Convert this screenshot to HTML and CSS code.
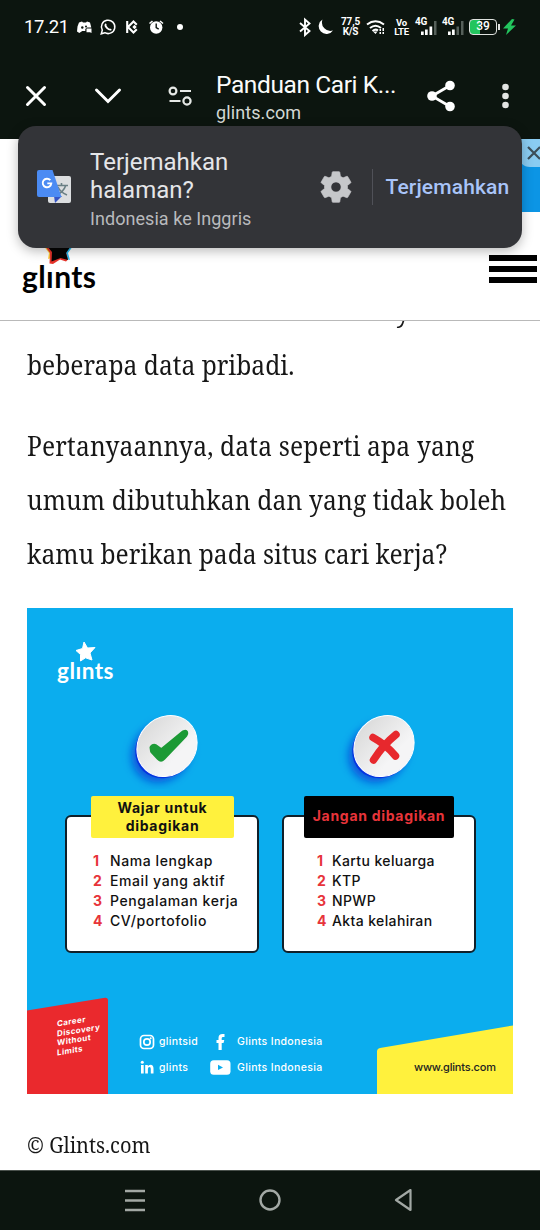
FILE: index.html
```html
<!DOCTYPE html>
<html lang="id">
<head>
<meta charset="utf-8">
<title>Panduan Cari Kerja</title>
<link rel="stylesheet" href="styles.css">
</head>
<body>
<div class="phone">
  <header class="status">
    <span class="clock">17.21</span>
    <svg class="status-left" width="112" height="20" viewBox="76 17 112 20">
      <path fill="#fff" d="M79 22.500l3-1 1 1h3l1-1 3 1 1.300 5h-4.500l-1.500 1.500v2h-3l-3 2-2.300-1.500.5-5z"/><circle cx="82.300" cy="27.500" r="1.200" fill="#0c150f"/><path fill="#fff" d="M86.500 28.500h5V33l-1.500-.8h-3.500z"/><circle cx="86" cy="26.500" r="1" fill="#0c150f"/>
      <path fill="none" stroke="#fff" stroke-width="1.500" d="M101.300 33.800l1-3.600a6.700 6.700 0 1 1 2.500 2.500z"/><path fill="none" stroke="#fff" stroke-width="1.900" stroke-linecap="round" d="M105.600 24.600c-.8 1.500 2.700 5.400 5 5"/>
      <path fill="none" stroke="#fff" stroke-width="2.100" d="M127.200 21v12M128 27l5.500-5.500 3.300 3.200M128 27l5.500 5.500 3.300-3.200"/><path fill="#fff" d="M134.500 24.800l2.200 2.200-2.200 2.200-2.200-2.200z"/>
      <circle cx="156.200" cy="27.500" r="6.200" fill="#fff"/><path stroke="#fff" stroke-width="1.600" d="M149.500 23.500l3-2.500M163 23.500l-3-2.500"/><path fill="none" stroke="#0c150f" stroke-width="1.400" d="M156.200 23.500v4.200l2.500 1.500"/>
      <circle cx="180" cy="27" r="3" fill="#fff"/>
    </svg>
    <span class="push"></span>
    <svg class="status-bt" width="36" height="20" viewBox="298 17 36 20">
      <path fill="none" stroke="#fff" stroke-width="1.900" d="M300 23l9.500 8-4.500 4V19.500l4.500 4-9.500 8"/><path fill="#fff" d="M322.500 19.500A7.800 7.800 0 1 0 333 30.500 8.500 8.500 0 0 1 322.500 19.500z"/>
    </svg>
    <span class="tiny speed"><span>77,5</span><span>K/S</span></span>
    <svg class="wifi" width="20" height="18" viewBox="0 0 20 18"><g fill="none" stroke="#fff" stroke-width="2"><path d="M1 6.500q8.500-6.500 17 0M4 10q5.500-4.500 11 0M6.500 13q3-2.500 5.500-.5"/></g><path fill="#fff" d="M7 13.500h4.500L9.500 16zM13.500 11h1.500v2h-1.500zM13.500 14h1.500v2h-1.500zM16.500 10h1.500v3h-1.500zM16.500 14h1.500v2h-1.500z"/></svg>
    <span class="tiny lte"><span>Vo</span><span>LTE</span></span>
    <span class="signal"><b>4G</b><svg width="22" height="18" viewBox="0 0 22 18"><path fill="#fff" d="M6 13.500h2.700V17H6zM10 11.500h2.700V17H10zM14.500 8.500h2.700V17h-2.700z"/><path fill="#56605a" d="M19 3h2.500v14H19z"/></svg></span>
    <span class="signal"><b>4G</b><svg width="22" height="18" viewBox="0 0 22 18"><path fill="#fff" d="M6 13.500h2.700V17H6zM10 11.500h2.700V17H10z"/><path fill="#56605a" d="M14.500 8.500H17V17h-2.500zM19 3h2.500v14H19z"/></svg></span>
    <span class="battery">39</span><i class="cap"></i>
    <svg width="15" height="18" viewBox="0 0 15 18"><path fill="#23c55e" d="M10 1L1 10.500h5L4 17l10-9.500H9l3.500-6z"/></svg>
  </header>

  <div class="toolbar">
    <svg class="tools" width="200" height="40" viewBox="0 76 200 40">
      <g fill="none" stroke="#fff" stroke-width="3" stroke-linecap="round"><path d="M27.500 87.500l17 17M44.500 87.500l-17 17"/><path d="M96.500 90l11.500 11.500L119.500 90"/></g>
      <g fill="none" stroke="#e6e9e6" stroke-width="2.200"><circle cx="173" cy="91" r="3.400"/><path d="M180 91h11M169.500 101h11"/><circle cx="187" cy="101" r="3.600"/></g>
    </svg>
    <div class="titles"><div class="title">Panduan Cari K...</div><div class="host">glints.com</div></div>
    <svg class="more" width="113" height="40" viewBox="420 76 113 40">
      <path fill="none" stroke="#fff" stroke-width="2.800" d="M450 85.500L432 96l18 10.500"/><g fill="#fff"><circle cx="450" cy="85.500" r="4.800"/><circle cx="432" cy="96" r="4.800"/><circle cx="450" cy="106.500" r="4.800"/></g>
      <g fill="#e3e5e3"><circle cx="505.500" cy="87" r="3.300"/><circle cx="505.500" cy="96" r="3.300"/><circle cx="505.500" cy="105" r="3.300"/></g>
    </svg>
  </div>

  <div class="site">
    <div class="banner"><span class="banner-close"><svg width="14" height="14" viewBox="0 0 14 14"><path stroke="#3d4f5a" stroke-width="2.200" d="M1 1l12 12M13 1L1 13"/></svg></span></div>
    <div class="site-row">
      <div class="brand">
        <svg width="34" height="34" viewBox="0 0 34 34"><path fill="#ffd13b" d="M1 14l6 8-1 6 10-3 6-12z"/><path fill="#27b9ee" d="M12 15l8 12 8 2-2-7 5-7z"/><path fill="#e6332a" d="M3 15l5 7-.5 10.500 3.500.5 7-4.500 6 2 2-2-2-7 2-6z"/><path fill="#050505" d="M5 15l5 6-.5 9.500L18.500 27l7.500 2-2-7 5-7-9-3H10z"/></svg>
        <span>glınts</span>
      </div>
      <div class="burger"><i></i><i></i><i></i></div>
    </div>
  </div>

  <main class="article">
    <p class="cut">y</p>
    <p>beberapa data pribadi.</p>
    <p><span class="wide">Pertanyaannya, data seperti apa yang</span><br><span class="wider">umum dibutuhkan dan yang tidak boleh</span><br>kamu berikan pada situs cari kerja?</p>

    <section class="poster">
      <svg class="corners" width="486" height="486" viewBox="0 0 486 486">
        <path fill="#ea292d" d="M0 402.500L78 389.700Q81 389.500 81 392.500V486H0z"/>
        <path fill="#fff13d" d="M350 486V443.500Q350 440.500 353 440L486 417.500V486z"/>
      </svg>
      <div class="poster-brand"><svg width="22" height="21" viewBox="0 0 22 21"><path fill="#fff" stroke="#fff" stroke-linejoin="round" d="M9 1l3.500 6 7.500-.5-5 5.500 2 7-6.500-2.200L5.500 20V13.500L1 9.500l6.500-2z"/></svg><span>glınts</span></div>
      <div class="columns">
        <div class="column">
          <svg class="disc" width="90" height="84" viewBox="0 0 90 84"><defs><linearGradient id="face" x1=".5" y1="0" x2=".5" y2="1"><stop offset="0" stop-color="#dcdcdc"/><stop offset=".75" stop-color="#f5f5f6"/></linearGradient><filter id="soft" x="-30%" y="-30%" width="160%" height="160%"><feGaussianBlur stdDeviation="4"/></filter></defs>
            <ellipse cx="44" cy="48" rx="31" ry="28" transform="rotate(-45 44 48)" fill="#0757dc" filter="url(#soft)"/><ellipse cx="48.500" cy="43" rx="32" ry="28.500" transform="rotate(-45 48.500 43)" fill="#0535e0"/><ellipse cx="50" cy="41" rx="32" ry="28.500" transform="rotate(-48 50 41)" fill="url(#face)" stroke="#fff"/>
            <path fill="#1c9a35" stroke="#1c9a35" stroke-width="5" stroke-linejoin="round" d="M35 42.500q2-2.500 4.500 0l5 3.500L67 27.500q3-1 1 2.500L46 53q-2 2-4 0L35.500 46z"/></svg>
          <div class="card left"><h3 class="tag yellow"><span>Wajar untuk</span><span>dibagikan</span></h3>
            <ol><li><b>1</b><span>Nama lengkap</span></li><li><b>2</b><span>Email yang aktif</span></li><li><b>3</b><span>Pengalaman kerja</span></li><li><b>4</b><span>CV/portofolio</span></li></ol></div>
        </div>
        <div class="column">
          <svg class="disc" width="90" height="84" viewBox="0 0 90 84"><ellipse cx="44" cy="48" rx="31" ry="28" transform="rotate(-45 44 48)" fill="#0757dc" filter="url(#soft)"/><ellipse cx="48.500" cy="43" rx="32" ry="28.500" transform="rotate(-45 48.500 43)" fill="#0535e0"/><ellipse cx="50" cy="41" rx="32" ry="28.500" transform="rotate(-48 50 41)" fill="url(#face)" stroke="#fff"/>
            <path fill="none" stroke="#e7282d" stroke-width="7.500" stroke-linecap="round" d="M39 32.500q13 7 22.500 18.500M62 29.500Q49 40 39.500 55"/></svg>
          <div class="card right"><h3 class="tag black"><span>Jangan dibagikan</span></h3>
            <ol><li><b>1</b><span>Kartu keluarga</span></li><li><b>2</b><span>KTP</span></li><li><b>3</b><span>NPWP</span></li><li><b>4</b><span>Akta kelahiran</span></li></ol></div>
        </div>
      </div>
      <footer class="poster-foot">
        <div class="slogan">Career<br>Discovery<br>Without<br>Limits</div>
        <div class="social">
          <svg width="16" height="16" viewBox="0 0 16 16"><g fill="none" stroke="#fff" stroke-width="1.700"><rect x="1.500" y="1.500" width="13" height="13" rx="3.500"/><circle cx="8" cy="8" r="3.200"/></g><circle cx="11.700" cy="4.300" r="1" fill="#fff"/></svg><span>glintsid</span>
          <svg width="22" height="16" viewBox="0 0 22 16"><path fill="#fff" d="M9.500 16V9H7.500V6h2V4q0-4 4-4h2v3H14q-1.300 0-1.300 1.300V6h2.600l-.8 3h-1.800v7z"/></svg><span>Glints Indonesia</span>
          <svg width="16" height="16" viewBox="0 0 16 16"><path fill="#fff" d="M2 5h2.700v8.500H2zM6.200 5h2.600v1.200q1-1.500 2.700-1.500 3 0 3 3.800v5h-2.700V9q0-2-1.300-2-1.600 0-1.600 2v4.500H6.200z"/><circle cx="3.300" cy="2.200" r="1.500" fill="#fff"/></svg><span>glints</span>
          <svg width="22" height="16" viewBox="0 0 22 16"><rect x="1.200" y=".2" width="20.300" height="14.500" rx="3.500" fill="#fff"/><path fill="#0badee" d="M9 4.700l5 2.700-5 2.700z"/></svg><span>Glints Indonesia</span>
        </div>
        <div class="url">www.glints.com</div>
      </footer>
    </section>
    <div class="caption">© Glints.com</div>
  </main>

  <nav class="nav">
    <svg width="24" height="24" viewBox="0 0 24 24"><path stroke="#a2a8a4" stroke-width="2.600" d="M2 2h20M2 11.500h20M2 21h20"/></svg>
    <svg width="24" height="24" viewBox="0 0 24 24"><circle cx="12" cy="11" r="9.500" fill="none" stroke="#a2a8a4" stroke-width="2.400"/></svg>
    <svg width="24" height="24" viewBox="0 0 24 24"><path fill="none" stroke="#a2a8a4" stroke-width="2.200" stroke-linejoin="round" d="M18.500 1v20L4 11z"/></svg>
  </nav>

  <aside class="translate">
    <svg width="36" height="36" viewBox="36 169 36 36"><rect x="48" y="176" width="23" height="27" rx="2" fill="#dcdee0"/><path fill="none" stroke="#6b8085" stroke-width="1.600" d="M55 185.500h13M61.500 183v3M65.500 186q-2 6-9 9M58 187q2 5 9 8"/><path fill="#3454c5" d="M54 196h8l-7 7z"/><path fill="#4b8bf3" d="M39 170h13.500l9 27H39q-2 0-2-2v-23q0-2 2-2z"/><path fill="none" stroke="#fff" stroke-width="1.900" d="M50.300 180.200a4.300 4.300 0 1 0 1 3.200h-4"/></svg>
    <div class="translate-text"><div class="ask">Terjemahkan<br>halaman?</div><div class="langs">Indonesia ke Inggris</div></div>
    <svg class="gear" width="32" height="32" viewBox="2 2 20 20"><path fill="#c6c7ca" stroke="#c6c7ca" stroke-width=".4" d="M19.140 12.940c.04-.3.06-.61.06-.94s-.02-.64-.07-.94l2.030-1.580c.18-.14.23-.41.12-.61l-1.920-3.320c-.12-.22-.37-.29-.59-.22l-2.390.96c-.5-.38-1.030-.7-1.620-.94l-.36-2.540c-.04-.24-.24-.41-.48-.41h-3.840c-.24 0-.43.17-.47.41l-.36 2.540c-.59.24-1.130.57-1.620.94l-2.390-.96c-.22-.08-.47 0-.59.22L2.740 8.870c-.12.21-.08.47.12.61l2.030 1.580c-.05.3-.09.63-.09.94s.02.64.07.94l-2.030 1.580c-.18.14-.23.41-.12.61l1.920 3.320c.12.22.37.29.59.22l2.390-.96c.5.38 1.030.7 1.620.94l.36 2.540c.05.24.24.41.48.41h3.840c.24 0 .44-.17.47-.41l.36-2.540c.59-.24 1.130-.56 1.620-.94l2.390.96c.22.08.47 0 .59-.22l1.920-3.320c.12-.22.07-.47-.12-.61zM12 15.200a3.200 3.200 0 1 1 0-6.400 3.200 3.200 0 0 1 0 6.400z"/></svg>
    <span class="rule"></span>
    <span class="action">Terjemahkan</span>
  </aside>
</div>
</body>
</html>
```
FILE: styles.css
```css
* { box-sizing: border-box; }
body { margin: 0; background: #fff; }
svg { display: block; flex: none; }
p, h3, ol { margin: 0; padding: 0; font-weight: inherit; }
.phone { position: relative; width: 540px; height: 1230px; overflow: hidden; display: flex; flex-direction: column; font-family: Roboto, sans-serif; }

.status { height: 54px; flex: none; background: #0c150f; color: #fff; display: flex; align-items: center; padding: 0 23px 0 24px; }
.clock { font-size: 18.500px; width: 52px; letter-spacing: -.3px; }
.push { flex: 1; }
.tiny { display: flex; flex-direction: column; font-size: 10.5px; line-height: 9px; font-weight: 700; text-align: center; }
.speed { width: 21px; margin-left: 6px; font-size: 10px; letter-spacing: -.2px; line-height: 10px; }
.wifi { margin-left: 5px; }
.lte { margin-left: 7px; width: 17px; font-size: 9.500px; letter-spacing: -.2px; }
.signal { position: relative; margin-left: 5px; width: 22px; }
.signal b { position: absolute; left: 0; top: -2px; font-size: 10px; line-height: 12px; letter-spacing: -.3px; }
.battery { margin: 0 0 0 5px; width: 28px; height: 16px; border: 1.500px solid #dfe2df; border-radius: 4px; background: linear-gradient(90deg, #23c55e 38%, transparent 38%); font-size: 12px; line-height: 13px; font-weight: 500; text-align: center; }
.cap { width: 2px; height: 6px; margin: 0 2px 0 1px; background: #dfe2df; }

.toolbar { height: 85px; flex: none; background: #0c150f; color: #fbfcfb; display: flex; }
.tools, .more { margin-top: 22px; }
.titles { margin-left: 16px; width: 204px; padding-top: 15px; white-space: nowrap; }
.title { font-size: 24.500px; line-height: 32px; letter-spacing: -.4px; }
.host { font-size: 18px; line-height: 24px; color: #d3d8d4; letter-spacing: .1px; }

.site { height: 182px; flex: none; background: #fff; border-bottom: 1px solid #b9b9b9; display: flex; flex-direction: column; }
.banner { align-self: flex-end; width: 22px; height: 73px; flex: none; background: #0c95e5; }
.banner-close { display: flex; align-items: center; justify-content: flex-end; width: 22px; height: 28px; background: #8accf2; border-radius: 0 0 0 12px; }
.banner-close svg { margin-right: -1px; }
.site-row { display: flex; justify-content: space-between; padding: 19px 3px 0 22px; }
.brand { display: flex; flex-direction: column; font: 700 30px/30px Lato, sans-serif; color: #000; }
.brand svg { margin-left: 20px; }
.brand span { margin-top: -4px; letter-spacing: .4px; }
.burger { width: 48px; padding-top: 24px; display: flex; flex-direction: column; gap: 5px; }
.burger i { height: 6px; background: #000; }

.article { flex: 1; min-height: 0; overflow: hidden; background: #fff; padding: 0 27px; font: 27px/54px "Noto Serif", "Liberation Serif", serif; color: #171717; white-space: nowrap; }
.article p { transform: scaleX(.911); transform-origin: 0 0; }
.article p + p { margin-bottom: 27px; }
.article .cut { height: 17px; line-height: 54px; padding-left: 405px; display: flex; align-items: flex-end; }
.wide { letter-spacing: .18px; }
.wider { letter-spacing: .14px; }
.poster { position: relative; width: 486px; height: 486px; background: #0badee; display: flex; flex-direction: column; font-family: Inter, sans-serif; color: #111; }
.corners { position: absolute; left: 0; top: 0; }
.poster-brand { padding: 33px 0 0 30px; height: 103px; color: #fff; font: 700 22.500px/24px Lato, sans-serif; letter-spacing: .5px; }
.poster-brand svg { margin-left: 18px; }
.poster-brand span { display: block; margin-top: -3px; }
.columns { display: flex; gap: 23px; padding-left: 38px; }
.column { width: 194px; }
.disc { margin-left: 52px; margin-top: -6px; }
.card { margin-top: 26px; height: 138px; background: #fff; border: 2px solid #10202a; border-radius: 6px; }
.tag { margin: -21px auto 0; height: 42px; border-radius: 2px; display: flex; flex-direction: column; justify-content: center; text-align: center; font-size: 14px; line-height: 18px; font-weight: 700; letter-spacing: .7px; }
.yellow { width: 143px; margin-left: 24px; background: #fff13d; color: #111; }
.black { width: 150px; background: #000; color: #e7343a; padding-bottom: 3px; }
.card ol { list-style: none; padding: 13px 0 0 26px; font-size: 14px; line-height: 20px; font-weight: 500; letter-spacing: .58px; }
.card.right ol { padding-left: 33px; letter-spacing: .38px; }
.card li { display: flex; }
.card li b { width: 17px; color: #e7343a; font-weight: 700; }
.card.right li b { width: 15px; }
.poster-foot { position: relative; display: flex; flex: 1; font-weight: 500; font-size: 10.500px; letter-spacing: .33px; color: #fff; }
.slogan { position: absolute; left: 30px; top: 63px; font-size: 8px; line-height: 9.700px; font-weight: 700; letter-spacing: .4px; transform: skewY(-9deg); }
.social { margin: 75.500px 0 0 112px; display: grid; grid-template-columns: 20px 50px 28px 90px; grid-auto-rows: 26px; align-items: center; height: 52px; }
.url { margin: 101px 0 0 87px; color: #222; line-height: 26px; font-size: 11px; letter-spacing: -.2px; }
.caption { font-size: 22px; line-height: 54px; margin-top: 23px; transform: scaleX(.911); transform-origin: 0 0; }

.nav { height: 60px; flex: none; background: #0c150f; border-top: 1px solid #4a514c; display: flex; align-items: center; padding-left: 123px; gap: 110.500px; }

.translate { position: absolute; left: 18px; top: 126px; width: 504px; height: 122px; border-radius: 18px; background: #333438; box-shadow: 0 3px 12px rgba(0, 0, 0, .28); display: flex; align-items: center; padding-left: 18px; }
.translate-text { margin-left: 18px; width: 230px; padding-top: 7px; }
.ask { font-size: 24px; line-height: 28px; color: #e5e6e9; }
.langs { font-size: 18px; line-height: 30px; color: #b9babd; letter-spacing: .05px; }
.rule { width: 1px; height: 36px; background: #505158; margin: 0 12.500px 0 20px; }
.action { font-size: 21px; font-weight: 500; color: #a9c4f8; letter-spacing: .15px; }
```
